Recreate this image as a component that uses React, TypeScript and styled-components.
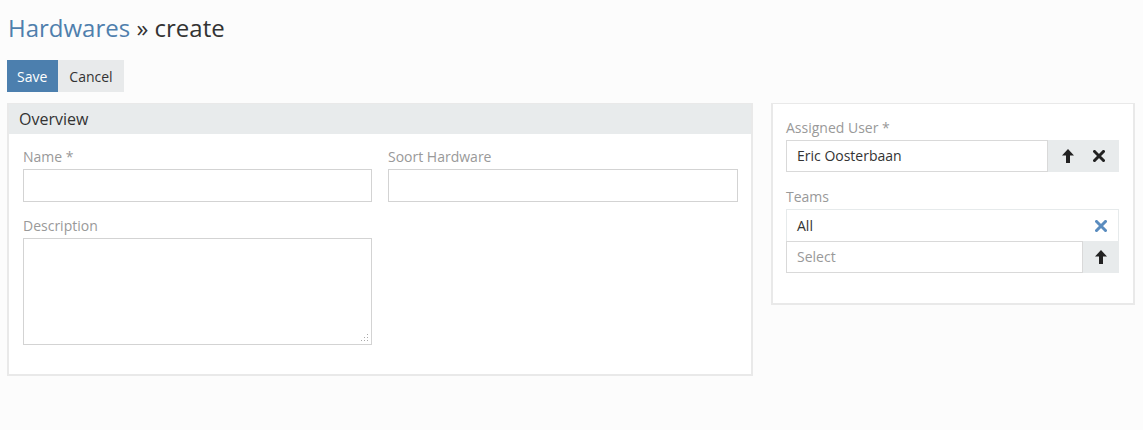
import React from 'react'
import styled, { createGlobalStyle } from 'styled-components'

const GlobalStyle = createGlobalStyle`
  html, body {
    margin: 0;
    padding: 0;
    background: #fcfcfc;
    font-family: "Open Sans", "Liberation Sans", sans-serif;
    color: #333;
  }
  * { box-sizing: border-box; }
`

const Page = styled.div`
  padding: 10px 8px 8px 7px;
`

const Title = styled.h3`
  margin: 0 0 0 1px;
  font-size: 24px;
  font-weight: 400;
  line-height: 36px;
  color: #333;
  a {
    color: #4f7fad;
    text-decoration: none;
  }
`

const Toolbar = styled.div`
  display: flex;
  margin-top: 14px;
  margin-bottom: 11px;
`

const Button = styled.button<{ primary?: boolean }>`
  height: 32px;
  padding: ${p => (p.primary ? '0 11px 0 10px' : '0 11px')};
  border: 0;
  font-family: inherit;
  font-size: 14px;
  color: ${p => (p.primary ? '#fff' : '#333')};
  background: ${p => (p.primary ? '#4c7fae' : '#e8eaeb')};
`

const Columns = styled.div`
  display: grid;
  grid-template-columns: 746px 364px;
  column-gap: 18px;
  align-items: start;
`

const Panel = styled.div<{ pad?: boolean }>`
  background: #fff;
  border: 2px solid #e9e9e9;
  border-top-width: 1px;
  padding: ${p => (p.pad ? '14px 14px 30px 13px' : '0')};
`

const PanelHeading = styled.div`
  background: #e8ebec;
  height: 30px;
  padding: 0 10px;
  font-size: 16px;
  line-height: 30px;
  color: #333;
`

const PanelBody = styled.div`
  padding: 13px 13px 29px 14px;
`

const Row = styled.div`
  display: grid;
  grid-template-columns: 349px 350px;
  column-gap: 16px;
`

const Cell = styled.div`
  margin-bottom: 14px;
`

const Label = styled.label`
  display: block;
  font-size: 14px;
  line-height: 20px;
  color: #999;
  margin-bottom: 2px;
`

const Input = styled.div`
  height: 33px;
  border: 1px solid #d3d3d3;
  background: #fff;
`

const TextArea = styled.div`
  position: relative;
  height: 107px;
  border: 1px solid #d3d3d3;
  background: #fff;
`

const Grip = styled.svg`
  position: absolute;
  right: 2px;
  bottom: 2px;
`

const Group = styled.div`
  display: flex;
  height: 32px;
`

const GroupText = styled.div`
  flex: 1;
  border: 1px solid #d9d9d9;
  padding: 0 10px;
  font-size: 14px;
  line-height: 30px;
  color: #333;
`

const Placeholder = styled.span`
  color: #999;
`

const AddOn = styled.div<{ w: number }>`
  width: ${p => p.w}px;
  display: flex;
  align-items: center;
  justify-content: space-around;
  padding: 0 4px;
  background: #e8ebec;
`

const ListItem = styled.div`
  display: flex;
  align-items: center;
  justify-content: space-between;
  height: 32px;
  padding: 0 11px 0 10px;
  border: 1px solid #e6eaeb;
  border-bottom: 0;
  font-size: 14px;
  color: #333;
`

const Field = styled.div`
  margin-bottom: 15px;
  &:last-child {
    margin-bottom: 0;
  }
`

const ArrowUp = ({ color = '#222' }: { color?: string }) => (
  <svg width="12" height="14" viewBox="0 0 12 14">
    <path d="M6 0 L12 6.5 H8 V14 H4 V6.5 H0 Z" fill={color} />
  </svg>
)

const Cross = ({ color = '#222' }: { color?: string }) => (
  <svg width="12" height="12" viewBox="0 0 12 12">
    <path d="M1.5 1.5 L10.5 10.5 M10.5 1.5 L1.5 10.5" stroke={color} strokeWidth="3" strokeLinecap="square" />
  </svg>
)

export default function App() {
  return (
    <Page>
      <GlobalStyle />
      <Title>
        <a href="#">Hardwares</a> » create
      </Title>
      <Toolbar>
        <Button primary>Save</Button>
        <Button>Cancel</Button>
      </Toolbar>
      <Columns>
        <Panel>
          <PanelHeading>Overview</PanelHeading>
          <PanelBody>
            <Row>
              <Cell>
                <Label>Name *</Label>
                <Input />
              </Cell>
              <Cell>
                <Label>Soort Hardware</Label>
                <Input />
              </Cell>
            </Row>
            <Row>
              <div>
                <Label>Description</Label>
                <TextArea>
                  <Grip width="8" height="8" viewBox="0 0 8 8">
                    <g fill="#aaa">
                      <rect x="6" y="0" width="1" height="1" />
                      <rect x="3" y="3" width="1" height="1" />
                      <rect x="6" y="3" width="1" height="1" />
                      <rect x="0" y="6" width="1" height="1" />
                      <rect x="3" y="6" width="1" height="1" />
                      <rect x="6" y="6" width="1" height="1" />
                    </g>
                  </Grip>
                </TextArea>
              </div>
            </Row>
          </PanelBody>
        </Panel>
        <Panel pad>
          <Field>
            <Label>Assigned User *</Label>
            <Group>
              <GroupText>Eric Oosterbaan</GroupText>
              <AddOn w={71}>
                <ArrowUp />
                <Cross />
              </AddOn>
            </Group>
          </Field>
          <Field>
            <Label>Teams</Label>
            <ListItem>
              All
              <Cross color="#5a8cbf" />
            </ListItem>
            <Group>
              <GroupText>
                <Placeholder>Select</Placeholder>
              </GroupText>
              <AddOn w={36}>
                <ArrowUp />
              </AddOn>
            </Group>
          </Field>
        </Panel>
      </Columns>
    </Page>
  )
}
